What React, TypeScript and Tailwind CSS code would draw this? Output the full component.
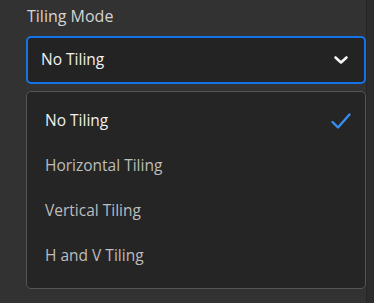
import { useState } from 'react';

const options = ['No Tiling', 'Horizontal Tiling', 'Vertical Tiling', 'H and V Tiling'];

export default function App() {
  const [selected, setSelected] = useState('No Tiling');

  return (
    <div className="flex h-[303px] w-[374px] bg-[#2c2c2c] font-['Open_Sans',sans-serif]">
      {/* Panel */}
      <div className="flex w-[366px] flex-col bg-[#323232] pl-[26px] pt-[5px]">
        <div className="pl-px text-[16px] leading-[22px] text-[#d4d4d4]">Tiling Mode</div>

        {/* Picker button */}
        <button className="mt-[9px] flex h-[48px] w-[340px] items-center justify-between rounded-[5px] border-2 border-[#1473e6] bg-[#232323] pl-[13px] pr-[15px] text-left">
          <span className="text-[15.5px] text-[#f0f0f0]">{selected}</span>
          <svg width="16" height="16" viewBox="0 0 16 16" fill="none">
            <path d="M2.5 5.5 8 10.5 13.5 5.5" stroke="#f5f5f5" strokeWidth="2.6" strokeLinecap="round" strokeLinejoin="round" />
          </svg>
        </button>

        {/* Menu */}
        <div className="mt-[7px] flex h-[198px] w-[340px] flex-col rounded-[5px] border border-[#555555] bg-[#252525] pt-[6px]">
          {options.map((opt) => {
            const active = opt === selected;
            return (
              <div
                key={opt}
                onClick={() => setSelected(opt)}
                className="flex h-[45px] items-center justify-between pl-[18px] pr-[13px]"
              >
                <span className={`text-[15.5px] ${active ? 'text-[#f0f0f0]' : 'text-[#bdbdbd]'}`}>{opt}</span>
                {active && (
                  <svg width="22" height="20" viewBox="0 0 22 20" fill="none">
                    <path d="M2.5 11 8 16.5 19.5 3.5" stroke="#378ef0" strokeWidth="2.4" strokeLinecap="round" strokeLinejoin="round" />
                  </svg>
                )}
              </div>
            );
          })}
        </div>
      </div>
      <div className="w-px bg-[#262626]" />
    </div>
  );
}
